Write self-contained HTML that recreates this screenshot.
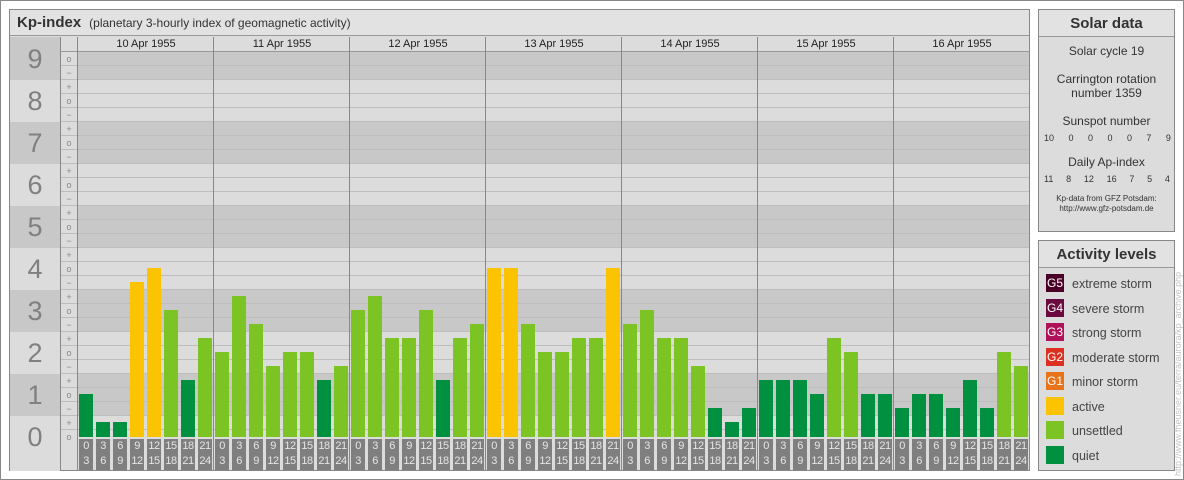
<!DOCTYPE html><html><head><meta charset="utf-8"><style>
*{margin:0;padding:0;box-sizing:border-box}
body{width:1184px;height:480px;position:relative;background:#fff;font-family:"Liberation Sans",sans-serif;overflow:hidden}
.a{position:absolute}
#frame{left:0;top:0;width:1184px;height:480px;border:1px solid #888}
#main{left:9px;top:9px;width:1021px;height:462px;border:1px solid #888;background:#dcdcdc}
.title{left:10px;top:10px;width:1019px;height:26px;background:#e2e2e2;border-bottom:1px solid #999;font-size:12px;color:#333;line-height:26px;padding-left:7px}
.title b{font-size:15px;color:#333;margin-right:8px}
#grid{left:78px;top:52px;width:951px;height:385px;background:
repeating-linear-gradient(to bottom,transparent 0,transparent 13px,#bdbdbd 13px,#bdbdbd 14px),
linear-gradient(to bottom,#c8c8c8 0,#c8c8c8 28px,#dcdcdc 28px,#dcdcdc 70px,#c8c8c8 70px,#c8c8c8 112px,#dcdcdc 112px,#dcdcdc 154px,#c8c8c8 154px,#c8c8c8 196px,#dcdcdc 196px,#dcdcdc 238px,#c8c8c8 238px,#c8c8c8 280px,#dcdcdc 280px,#dcdcdc 322px,#c8c8c8 322px,#c8c8c8 364px,#dcdcdc 364px)}
#nums{left:10px;top:37px;width:51px;height:434px;background:linear-gradient(to bottom,#c8c8c8 0,#c8c8c8 43px,#dcdcdc 43px,#dcdcdc 85px,#c8c8c8 85px,#c8c8c8 127px,#dcdcdc 127px,#dcdcdc 169px,#c8c8c8 169px,#c8c8c8 211px,#dcdcdc 211px,#dcdcdc 253px,#c8c8c8 253px,#c8c8c8 295px,#dcdcdc 295px,#dcdcdc 337px,#c8c8c8 337px,#c8c8c8 379px,#dcdcdc 379px);border-right:1px solid #888}
.n{position:absolute;left:0;width:50px;text-align:center;font-size:27px;color:#808080;line-height:30px}
#ticks{left:61px;top:52px;width:17px;font-size:9px;color:#888;text-align:center;line-height:14px;border-right:1px solid #888;height:419px}
#ticks div{height:14px;border-bottom:1px solid #bdbdbd}
.vl{position:absolute;top:37px;width:1px;height:434px;background:#888}
.dh{position:absolute;top:37px;height:15px;width:136px;text-align:center;font-size:11px;color:#222;line-height:15px;border-bottom:1px solid #999}
.b{position:absolute;width:14px}
.q{background:#009040}.u{background:#7cc424}.y{background:#fcc400}
.t{position:absolute;top:439px;width:14px;height:31px;background:#7f7f7f;color:#e6e6e6;font-size:11px;line-height:15px;text-align:center;letter-spacing:-0.5px}
.panel{position:absolute;left:1038px;width:137px;border:1px solid #888;background:#dcdcdc;color:#333;text-align:center}
.ph{height:27px;background:#e2e2e2;border-bottom:1px solid #999;font-weight:bold;font-size:15px;line-height:27px}
.row{font-size:9px;display:flex;justify-content:space-between;padding:0 6px}
.lg{position:relative;height:24.5px;text-align:left;font-size:12.5px;line-height:20px;padding-left:33px;color:#444}
.sw{position:absolute;left:7px;top:0;width:18px;height:18px;color:#fff;font-size:12px;line-height:18px;text-align:center}
</style></head><body>
<div class="a" id="frame"></div>
<div class="a" id="main"></div>
<div class="a title"><b>Kp-index</b>(planetary 3-hourly index of geomagnetic activity)</div>
<div class="a" id="nums">
<div class="n" style="top:7px">9</div><div class="n" style="top:49px">8</div><div class="n" style="top:91px">7</div><div class="n" style="top:133px">6</div><div class="n" style="top:175px">5</div><div class="n" style="top:217px">4</div><div class="n" style="top:259px">3</div><div class="n" style="top:301px">2</div><div class="n" style="top:343px">1</div><div class="n" style="top:385px">0</div>
</div>
<div class="a" style="left:61px;top:37px;width:17px;height:15px;border-right:1px solid #888;border-bottom:1px solid #999"></div>
<div class="a" id="ticks">
<div>o</div><div>−</div><div>+</div><div>o</div><div>−</div><div>+</div><div>o</div><div>−</div><div>+</div><div>o</div><div>−</div><div>+</div><div>o</div><div>−</div><div>+</div><div>o</div><div>−</div><div>+</div><div>o</div><div>−</div><div>+</div><div>o</div><div>−</div><div>+</div><div>o</div><div>−</div><div>+</div><div style="border:0">o</div>
</div>
<div class="a" id="grid"></div>
<div class="dh" style="left:78px">10 Apr 1955</div><div class="dh" style="left:214px">11 Apr 1955</div><div class="dh" style="left:350px">12 Apr 1955</div><div class="dh" style="left:486px">13 Apr 1955</div><div class="dh" style="left:622px">14 Apr 1955</div><div class="dh" style="left:758px">15 Apr 1955</div><div class="dh" style="left:894px">16 Apr 1955</div>
<div class="vl" style="left:77px"></div><div class="vl" style="left:213px"></div><div class="vl" style="left:349px"></div><div class="vl" style="left:485px"></div><div class="vl" style="left:621px"></div><div class="vl" style="left:757px"></div><div class="vl" style="left:893px"></div>

<div class="b q" style="left:79px;top:394px;height:43px"></div>
<div class="b q" style="left:96px;top:422px;height:15px"></div>
<div class="b q" style="left:113px;top:422px;height:15px"></div>
<div class="b y" style="left:130px;top:282px;height:155px"></div>
<div class="b y" style="left:147px;top:268px;height:169px"></div>
<div class="b u" style="left:164px;top:310px;height:127px"></div>
<div class="b q" style="left:181px;top:380px;height:57px"></div>
<div class="b u" style="left:198px;top:338px;height:99px"></div>

<div class="b u" style="left:215px;top:352px;height:85px"></div>
<div class="b u" style="left:232px;top:296px;height:141px"></div>
<div class="b u" style="left:249px;top:324px;height:113px"></div>
<div class="b u" style="left:266px;top:366px;height:71px"></div>
<div class="b u" style="left:283px;top:352px;height:85px"></div>
<div class="b u" style="left:300px;top:352px;height:85px"></div>
<div class="b q" style="left:317px;top:380px;height:57px"></div>
<div class="b u" style="left:334px;top:366px;height:71px"></div>

<div class="b u" style="left:351px;top:310px;height:127px"></div>
<div class="b u" style="left:368px;top:296px;height:141px"></div>
<div class="b u" style="left:385px;top:338px;height:99px"></div>
<div class="b u" style="left:402px;top:338px;height:99px"></div>
<div class="b u" style="left:419px;top:310px;height:127px"></div>
<div class="b q" style="left:436px;top:380px;height:57px"></div>
<div class="b u" style="left:453px;top:338px;height:99px"></div>
<div class="b u" style="left:470px;top:324px;height:113px"></div>

<div class="b y" style="left:487px;top:268px;height:169px"></div>
<div class="b y" style="left:504px;top:268px;height:169px"></div>
<div class="b u" style="left:521px;top:324px;height:113px"></div>
<div class="b u" style="left:538px;top:352px;height:85px"></div>
<div class="b u" style="left:555px;top:352px;height:85px"></div>
<div class="b u" style="left:572px;top:338px;height:99px"></div>
<div class="b u" style="left:589px;top:338px;height:99px"></div>
<div class="b y" style="left:606px;top:268px;height:169px"></div>

<div class="b u" style="left:623px;top:324px;height:113px"></div>
<div class="b u" style="left:640px;top:310px;height:127px"></div>
<div class="b u" style="left:657px;top:338px;height:99px"></div>
<div class="b u" style="left:674px;top:338px;height:99px"></div>
<div class="b u" style="left:691px;top:366px;height:71px"></div>
<div class="b q" style="left:708px;top:408px;height:29px"></div>
<div class="b q" style="left:725px;top:422px;height:15px"></div>
<div class="b q" style="left:742px;top:408px;height:29px"></div>

<div class="b q" style="left:759px;top:380px;height:57px"></div>
<div class="b q" style="left:776px;top:380px;height:57px"></div>
<div class="b q" style="left:793px;top:380px;height:57px"></div>
<div class="b q" style="left:810px;top:394px;height:43px"></div>
<div class="b u" style="left:827px;top:338px;height:99px"></div>
<div class="b u" style="left:844px;top:352px;height:85px"></div>
<div class="b q" style="left:861px;top:394px;height:43px"></div>
<div class="b q" style="left:878px;top:394px;height:43px"></div>

<div class="b q" style="left:895px;top:408px;height:29px"></div>
<div class="b q" style="left:912px;top:394px;height:43px"></div>
<div class="b q" style="left:929px;top:394px;height:43px"></div>
<div class="b q" style="left:946px;top:408px;height:29px"></div>
<div class="b q" style="left:963px;top:380px;height:57px"></div>
<div class="b q" style="left:980px;top:408px;height:29px"></div>
<div class="b u" style="left:997px;top:352px;height:85px"></div>
<div class="b u" style="left:1014px;top:366px;height:71px"></div>

<div class="t" style="left:79px">0<br>3</div><div class="t" style="left:96px">3<br>6</div><div class="t" style="left:113px">6<br>9</div><div class="t" style="left:130px">9<br>12</div><div class="t" style="left:147px">12<br>15</div><div class="t" style="left:164px">15<br>18</div><div class="t" style="left:181px">18<br>21</div><div class="t" style="left:198px">21<br>24</div>
<div class="t" style="left:215px">0<br>3</div><div class="t" style="left:232px">3<br>6</div><div class="t" style="left:249px">6<br>9</div><div class="t" style="left:266px">9<br>12</div><div class="t" style="left:283px">12<br>15</div><div class="t" style="left:300px">15<br>18</div><div class="t" style="left:317px">18<br>21</div><div class="t" style="left:334px">21<br>24</div>
<div class="t" style="left:351px">0<br>3</div><div class="t" style="left:368px">3<br>6</div><div class="t" style="left:385px">6<br>9</div><div class="t" style="left:402px">9<br>12</div><div class="t" style="left:419px">12<br>15</div><div class="t" style="left:436px">15<br>18</div><div class="t" style="left:453px">18<br>21</div><div class="t" style="left:470px">21<br>24</div>
<div class="t" style="left:487px">0<br>3</div><div class="t" style="left:504px">3<br>6</div><div class="t" style="left:521px">6<br>9</div><div class="t" style="left:538px">9<br>12</div><div class="t" style="left:555px">12<br>15</div><div class="t" style="left:572px">15<br>18</div><div class="t" style="left:589px">18<br>21</div><div class="t" style="left:606px">21<br>24</div>
<div class="t" style="left:623px">0<br>3</div><div class="t" style="left:640px">3<br>6</div><div class="t" style="left:657px">6<br>9</div><div class="t" style="left:674px">9<br>12</div><div class="t" style="left:691px">12<br>15</div><div class="t" style="left:708px">15<br>18</div><div class="t" style="left:725px">18<br>21</div><div class="t" style="left:742px">21<br>24</div>
<div class="t" style="left:759px">0<br>3</div><div class="t" style="left:776px">3<br>6</div><div class="t" style="left:793px">6<br>9</div><div class="t" style="left:810px">9<br>12</div><div class="t" style="left:827px">12<br>15</div><div class="t" style="left:844px">15<br>18</div><div class="t" style="left:861px">18<br>21</div><div class="t" style="left:878px">21<br>24</div>
<div class="t" style="left:895px">0<br>3</div><div class="t" style="left:912px">3<br>6</div><div class="t" style="left:929px">6<br>9</div><div class="t" style="left:946px">9<br>12</div><div class="t" style="left:963px">12<br>15</div><div class="t" style="left:980px">15<br>18</div><div class="t" style="left:997px">18<br>21</div><div class="t" style="left:1014px">21<br>24</div>

<div class="panel" style="top:9px;height:223px">
<div class="ph">Solar data</div>
<div style="font-size:12px;margin-top:7px;line-height:14px">Solar cycle 19</div>
<div style="font-size:12px;margin-top:14px;line-height:14px">Carrington rotation<br>number 1359</div>
<div style="font-size:12px;margin-top:14px;line-height:14px">Sunspot number</div>
<div class="row" style="margin-top:5px;padding:0 3px 0 5px">10<span>0</span><span>0</span><span>0</span><span>0</span><span>7</span><span>9</span></div>
<div style="font-size:12px;margin-top:12px;line-height:14px">Daily Ap-index</div>
<div class="row" style="margin-top:5px;padding:0 4px 0 5px"><span>11</span><span>8</span><span>12</span><span>16</span><span>7</span><span>5</span><span>4</span></div>
<div style="font-size:8px;margin-top:10px;line-height:10px">Kp-data from GFZ Potsdam:<br>http://www.gfz-potsdam.de</div>
</div>

<div class="panel" style="top:240px;height:231px">
<div class="ph">Activity levels</div>
<div style="padding-top:6px">
<div class="lg"><span class="sw" style="background:#4a0026">G5</span>extreme storm</div>
<div class="lg"><span class="sw" style="background:#6a0a3e">G4</span>severe storm</div>
<div class="lg"><span class="sw" style="background:#b0125a">G3</span>strong storm</div>
<div class="lg"><span class="sw" style="background:#dc3020">G2</span>moderate storm</div>
<div class="lg"><span class="sw" style="background:#e8731a">G1</span>minor storm</div>
<div class="lg"><span class="sw" style="background:#fcc400"></span>active</div>
<div class="lg"><span class="sw" style="background:#7cc424"></span>unsettled</div>
<div class="lg"><span class="sw" style="background:#009040"></span>quiet</div>
</div></div>
<div class="a" style="left:1178px;top:476px;transform:rotate(-90deg);transform-origin:0 0;font-size:9px;color:#c4c4c4;white-space:nowrap;line-height:10px;margin-left:-5px">http://www.fheusner.eu/terra/aurora/kp_archive.php</div>
</body></html>
